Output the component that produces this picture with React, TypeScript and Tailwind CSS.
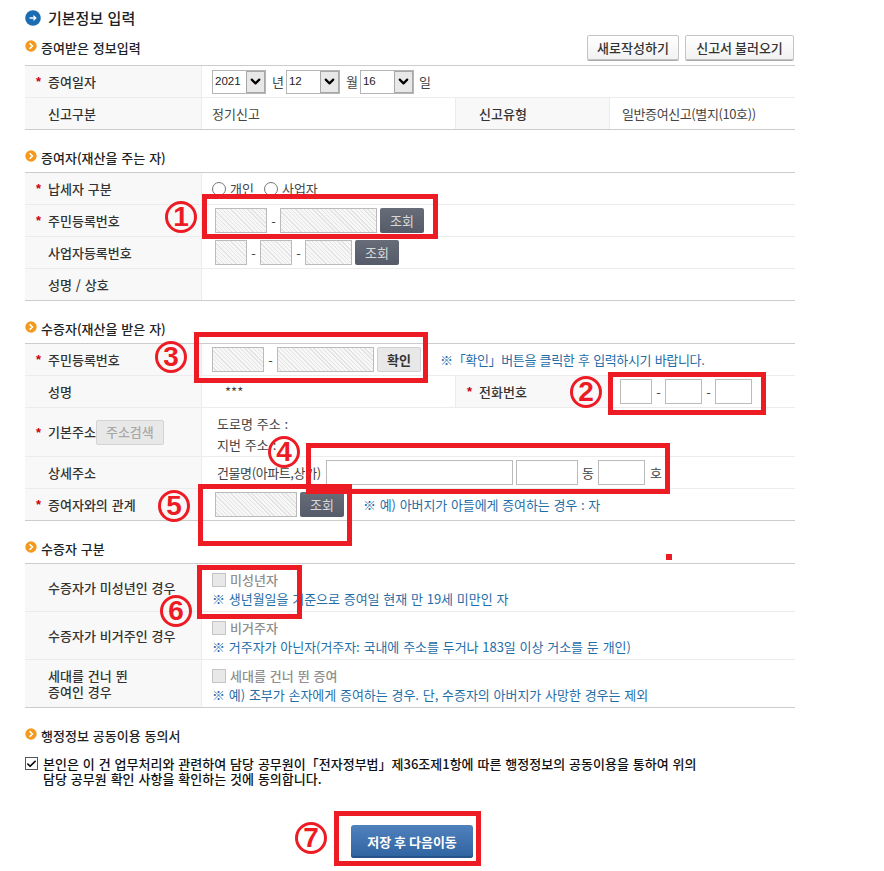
import React from 'react';
import { ChevronDown, Check } from 'lucide-react';

const hatch = 'bg-[repeating-linear-gradient(45deg,#f7f7f7_0,#f7f7f7_2px,#e4e4e4_2px,#e4e4e4_3px)]';

function Arrow({ color }: { color: string }) {
    return (
        <svg width="12" height="12" viewBox="0 0 12 12" className={`shrink-0 ${color}`}>
            <circle cx="6" cy="6" r="5.7" fill="currentColor" />
            <path d="M4.6 3.2 7.4 6 4.6 8.8" fill="none" stroke="#fff" strokeWidth="1.6" />
        </svg>
    );
}

function SectionHeader({ children, right, h = 'h-[42px]', pad = 'pb-[6px]' }: any) {
    return (
        <div className={`${h} flex items-end justify-between ${pad}`}>
            <div className="flex items-center gap-[4px] h-4 text-[13px] font-medium text-[#222]">
                <span className="-mt-[5px]"><Arrow color="text-[#f39a1e]" /></span>
                <span>{children}</span>
            </div>
            {right}
        </div>
    );
}

function Table({ children }: any) {
    return <div className="border-t border-[#cccccc] [&>*:last-child]:border-b-[#cccccc]">{children}</div>;
}

function Row({ h = 'h-8', children }: any) {
    return <div className={`flex border-b border-[#ececec] ${h}`}>{children}</div>;
}

function Label({ star, w = 'w-[177px]', children }: any) {
    return (
        <div className={`${w} shrink-0 bg-[#f8f8f8] border-r border-[#ececec] flex items-center pl-[11px] text-[#333] font-medium`}>
            <span className="w-3 shrink-0 text-[#c8000a] font-bold font-['Liberation_Sans',sans-serif] leading-none">{star ? '*' : ''}</span>
            <div className="flex items-center leading-4">{children}</div>
        </div>
    );
}

function Value({ className = '', children }: any) {
    return <div className={`flex items-center text-[#444] ${className}`}>{children}</div>;
}

function Field({ w, ml = '', hatched }: any) {
    return <div className={`${w} ${ml} h-[25px] border border-[#bbbbbb] shrink-0 ${hatched ? hatch : 'bg-white'}`} />;
}

function Dash({ w = 'w-[13px]' }: any) {
    return <span className={`${w} text-center shrink-0 text-[#444]`}>-</span>;
}

function DarkButton({ ml = 'ml-[3px]' }: any) {
    return (
        <button className={`${ml} w-11 h-[25px] shrink-0 rounded-[2px] bg-[linear-gradient(#666c78,#555b68)] text-[#d8d8d8]`}>
            조회
        </button>
    );
}

function YearSelect({ w, value, ml = '' }: any) {
    return (
        <div className={`${w} ${ml} h-6 border border-[#b5b5b5] flex items-center justify-between shrink-0 bg-white`}>
            <span className="pl-[2px] text-[#222] font-['Liberation_Sans',sans-serif] text-[11.5px]">{value}</span>
            <span className="w-[19px] h-full bg-[#e8e8e8] border border-[#a8a8a8] flex items-center justify-center">
                <ChevronDown className="w-[15px] h-[15px] text-black" strokeWidth={3.5} />
            </span>
        </div>
    );
}

function Note({ className = '', children }: any) {
    return <span className={`text-[#1f6ea8] whitespace-nowrap ${className}`}>{children}</span>;
}

function CheckLine({ label, note }: any) {
    return (
        <div className="flex flex-col pl-[10px] h-full">
            <div className="flex items-center gap-[4px] mt-[8px] h-[16px]">
                <span className="w-[14px] h-[14px] bg-[#e8e8e8] border border-[#c4c4c4] shrink-0" />
                <span className="text-[#8f8f8f] font-medium">{label}</span>
            </div>
            <Note className="mt-[3px] leading-4 tracking-[-0.05px]">{note}</Note>
        </div>
    );
}

function RedBox({ className }: { className: string }) {
    return <div className={`absolute border-[5px] border-[#ed1c24] ${className}`} />;
}

function Num({ n, className }: { n: string; className: string }) {
    return (
        <div className={`absolute w-8 h-8 rounded-full border-[3px] border-[#ed1c24] flex items-center justify-center text-[#ed1c24] font-bold text-[28px] leading-none font-['Liberation_Sans',sans-serif] ${className}`}>
            {n}
        </div>
    );
}

export default function App() {
    return (
        <div className="relative w-[884px] h-[871px] overflow-hidden bg-white text-[13px] [word-spacing:1px] font-['Noto_Sans_CJK_KR','Noto_Sans',sans-serif]">
            <div className="w-[770px] ml-[25px]">
                {/* title */}
                <div className="h-[25px] pt-[12px] flex items-center gap-[7px] text-[15px] font-medium text-[#222]">
                    <svg width="16" height="16" viewBox="0 0 16 16" className="shrink-0 -mt-px">
                        <circle cx="8" cy="8" r="7.8" fill="#1b6cb0" />
                        <path d="M4.6 8h6M8.4 5.6 10.8 8l-2.4 2.4" fill="none" stroke="#fff" strokeWidth="1.3" />
                    </svg>
                    <span>기본정보 입력</span>
                </div>

                <SectionHeader
                    h="h-[40px]"
                    pad="pb-[9px]"
                    right={
                        <div className="flex gap-[6px] mb-[-4px] mr-px text-[#333] font-medium">
                            <button className="w-[92px] h-[25px] bg-[linear-gradient(#ffffff,#f2f2f2)] border border-[#c4c4c4] rounded-[2px] shadow-[0_1px_0_#aaa]">새로작성하기</button>
                            <button className="w-[109px] h-[25px] bg-[linear-gradient(#ffffff,#f2f2f2)] border border-[#c4c4c4] rounded-[2px] shadow-[0_1px_0_#aaa]">신고서 불러오기</button>
                        </div>
                    }
                >
                    증여받은 정보입력
                </SectionHeader>
                <Table>
                    <Row>
                        <Label star>증여일자</Label>
                        <Value className="pl-[10px]">
                            <YearSelect w="w-[54px]" value="2021" />
                            <span className="ml-[6px]">년</span>
                            <YearSelect w="w-[54px]" ml="ml-[2px]" value="12" />
                            <span className="ml-[6px]">월</span>
                            <YearSelect w="w-[54px]" ml="ml-[2px]" value="16" />
                            <span className="ml-[5px]">일</span>
                        </Value>
                    </Row>
                    <Row>
                        <Label>신고구분</Label>
                        <Value className="pl-[10px] w-[253px]">정기신고</Value>
                        <Label w="w-[155px] border-l">신고유형</Label>
                        <Value className="pl-[12px] tracking-[-0.4px]">일반증여신고(별지(10호))</Value>
                    </Row>
                </Table>

                <SectionHeader>증여자(재산을 주는 자)</SectionHeader>
                <Table>
                    <Row>
                        <Label star>납세자 구분</Label>
                        <Value className="pl-[10px]">
                            <span className="w-[14px] h-[14px] rounded-full border border-[#777] shrink-0" />
                            <span className="ml-[4px]">개인</span>
                            <span className="w-[14px] h-[14px] rounded-full border border-[#777] shrink-0 ml-[10px]" />
                            <span className="ml-[4px]">사업자</span>
                        </Value>
                    </Row>
                    <Row>
                        <Label star>주민등록번호</Label>
                        <Value className="pl-[13px]">
                            <Field w="w-[52px]" hatched />
                            <Dash />
                            <Field w="w-[97px]" hatched />
                            <DarkButton />
                        </Value>
                    </Row>
                    <Row>
                        <Label>사업자등록번호</Label>
                        <Value className="pl-[13px]">
                            <Field w="w-8" hatched />
                            <Dash />
                            <Field w="w-8" hatched />
                            <Dash />
                            <Field w="w-[47px]" hatched />
                            <DarkButton />
                        </Value>
                    </Row>
                    <Row>
                        <Label>성명 / 상호</Label>
                        <Value />
                    </Row>
                </Table>

                <SectionHeader>수증자(재산을 받은 자)</SectionHeader>
                <Table>
                    <Row>
                        <Label star>주민등록번호</Label>
                        <Value className="pl-[10px]">
                            <Field w="w-[52px]" hatched />
                            <Dash />
                            <Field w="w-[97px]" hatched />
                            <button className="ml-[3px] w-11 h-[25px] rounded-[2px] bg-[#e8e8e8] border border-[#d0d0d0] text-[#333] font-bold">확인</button>
                            <Note className="ml-[19px] tracking-[-0.35px]">※「확인」버튼을 클릭한 후 입력하시기 바랍니다.</Note>
                        </Value>
                    </Row>
                    <Row>
                        <Label>성명</Label>
                        <Value className="pl-[23px] w-[253px]">***</Value>
                        <Label star w="w-[155px] border-l">전화번호</Label>
                        <Value className="pl-[10px]">
                            <Field w="w-8" />
                            <Dash />
                            <Field w="w-[37px]" />
                            <Dash />
                            <Field w="w-[37px]" />
                        </Value>
                    </Row>
                    <Row h="h-[49px]">
                        <Label star>
                            <span>기본주소</span>
                            <button className="w-[68px] h-[25px] rounded-[2px] bg-[#e8e8e8] border border-[#d4d4d4] text-[#a8a8a8]">주소검색</button>
                        </Label>
                        <div className="flex flex-col pl-[15px] pt-[5px] text-[#444] leading-[21px]">
                            <span>도로명 주소 :</span>
                            <span>지번 주소 :</span>
                        </div>
                    </Row>
                    <Row>
                        <Label>상세주소</Label>
                        <Value className="pl-[15px]">
                            <span className="w-[109px] shrink-0 whitespace-nowrap tracking-[-0.4px]">건물명(아파트,상가)</span>
                            <Field w="w-[187px]" />
                            <Field w="w-[62px]" ml="ml-[3px]" />
                            <span className="w-5 text-center">동</span>
                            <Field w="w-[47px]" />
                            <span className="ml-[5px]">호</span>
                        </Value>
                    </Row>
                    <Row>
                        <Label star>증여자와의 관계</Label>
                        <Value className="pl-[13px]">
                            <Field w="w-[82px]" hatched />
                            <DarkButton />
                            <Note className="ml-[19px] tracking-[-0.1px]">※ 예) 아버지가 아들에게 증여하는 경우 : 자</Note>
                        </Value>
                    </Row>
                </Table>

                <SectionHeader>수증자 구분</SectionHeader>
                <Table>
                    <Row h="h-12">
                        <Label>수증자가 미성년인 경우</Label>
                        <CheckLine label="미성년자" note="※ 생년월일을 기준으로 증여일 현재 만 19세 미만인 자" />
                    </Row>
                    <Row h="h-12">
                        <Label>수증자가 비거주인 경우</Label>
                        <CheckLine label="비거주자" note="※ 거주자가 아닌자(거주자: 국내에 주소를 두거나 183일 이상 거소를 둔 개인)" />
                    </Row>
                    <Row h="h-12">
                        <Label>
                            <span>세대를 건너 뛴<br />증여인 경우</span>
                        </Label>
                        <CheckLine label="세대를 건너 뛴 증여" note="※ 예) 조부가 손자에게 증여하는 경우. 단, 수증자의 아버지가 사망한 경우는 제외" />
                    </Row>
                </Table>

                <SectionHeader>행정정보 공동이용 동의서</SectionHeader>
                <div className="flex pt-[6px] text-[#111] font-medium">
                    <span className="w-[13px] h-[13px] mt-px border border-[#555] flex items-center justify-center shrink-0">
                        <Check className="w-3 h-3 text-black" strokeWidth={3.5} />
                    </span>
                    <p className="ml-[5px] leading-[15px] whitespace-nowrap">
                        본인은 이 건 업무처리와 관련하여 담당 공무원이「전자정부법」제36조제1항에 따른 행정정보의 공동이용을 통하여 위의<br />
                        담당 공무원 확인 사항을 확인하는 것에 동의합니다.
                    </p>
                </div>
                <div className="mt-[39px] pl-[326px]">
                    <button className="w-[122px] h-[33px] rounded-[3px] bg-[linear-gradient(#4f81bd,#2f639f)] shadow-[inset_0_-2px_0_#28528a] text-white font-bold">
                        저장 후 다음이동
                    </button>
                </div>
            </div>

            {/* annotations drawn on top of the capture */}
            <RedBox className="left-[202px] top-[194px] w-[236px] h-[45px]" />
            <RedBox className="left-[194px] top-[332px] w-[234px] h-[51px]" />
            <RedBox className="left-[608px] top-[372px] w-[158px] h-[43px]" />
            <RedBox className="left-[306px] top-[443px] w-[364px] h-[51px]" />
            <RedBox className="left-[198px] top-[484px] w-[154px] h-[62px]" />
            <RedBox className="left-[197px] top-[565px] w-[105px] h-[54px]" />
            <RedBox className="left-[334px] top-[811px] w-[147px] h-[55px]" />
            <div className="absolute left-[666px] top-[554px] w-[6px] h-[6px] bg-[#ed1c24]" />
            <Num n="1" className="left-[165px] top-[201px]" />
            <Num n="3" className="left-[155px] top-[341px]" />
            <Num n="2" className="left-[570px] top-[376px]" />
            <Num n="4" className="left-[268px] top-[436px]" />
            <Num n="5" className="left-[158px] top-[490px]" />
            <Num n="6" className="left-[160px] top-[595px]" />
            <Num n="7" className="left-[295px] top-[822px]" />
        </div>
    );
}
